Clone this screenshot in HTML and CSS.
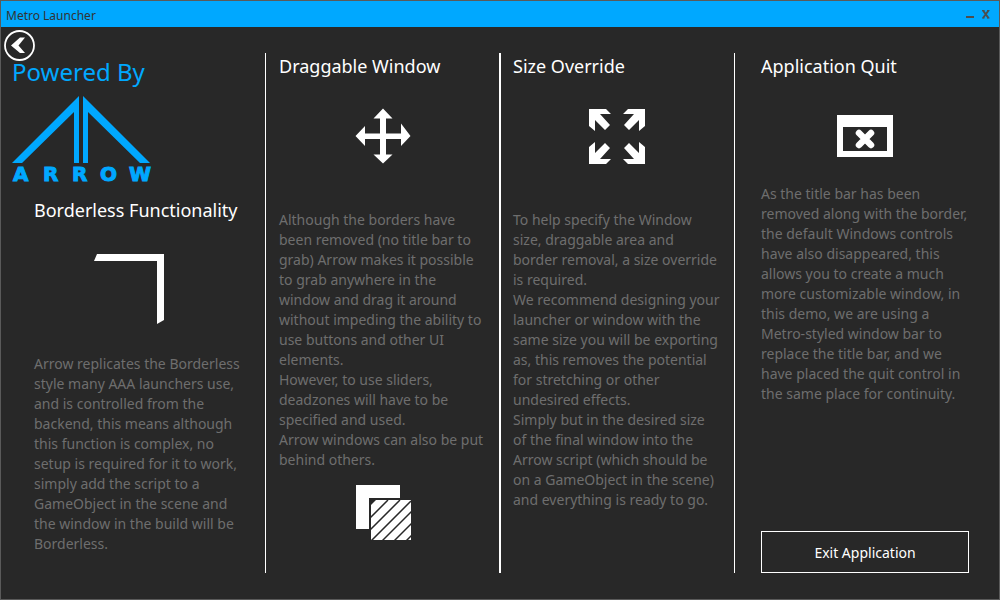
FILE: index.html
```html
<!DOCTYPE html>
<html lang="en">
<head>
<meta charset="utf-8">
<title>Metro Launcher</title>
<link rel="stylesheet" href="styles.css">
</head>
<body>
<div class="window">
  <header class="titlebar">
    <h1 class="title">Metro Launcher</h1>
    <div class="controls">
      <button class="control" type="button" aria-label="Minimize"><svg width="10" height="12" viewBox="0 0 10 12"><path d="M1 7h8v2H1z" fill="#4d4d4d"/></svg></button>
      <button class="control" type="button" aria-label="Close"><svg width="10" height="12" viewBox="0 0 10 12"><path d="M2 1.500 7.500 9M7.500 1.500 2 9" stroke="#4d4d4d" stroke-width="2"/><path d="M1 1.500h2.500M6 1.500h2.500M1 9h2.500M6 9h2.500" stroke="#4d4d4d"/></svg></button>
    </div>
  </header>
  <main class="columns">
    <section class="intro">
      <button class="back" type="button" aria-label="Back"><svg width="31" height="31" viewBox="0 0 31 31"><circle cx="15.500" cy="15.500" r="14.500" fill="none" stroke="#fff" stroke-width="1.800"/><path d="M7 15.500 16 7.500H21L14.500 15.500 21 23H16Z" fill="#fff"/></svg></button>
      <h2 class="powered">Powered By</h2>
      <svg class="logo" width="142" height="96" viewBox="0 0 142 96" fill="#00a8ff" role="img" aria-label="Arrow">
        <path d="M67 2V69H62V18L10 69H0Z"/>
        <path d="M71 2V69H76V18L128 69H138Z"/>
        <text class="wordmark" x="1 31 60 88 117" y="87">ARROW</text>
      </svg>
      <div class="feature">
        <h2 class="heading">Borderless Functionality</h2>
        <svg class="corner" width="72" height="72" viewBox="0 0 72 72" fill="#fff"><path d="M3 1H70V67L63 71V8H0Z"/></svg>
        <p class="text">Arrow replicates the Borderless style many AAA launchers use, and is controlled from the backend, this means although this function is complex, no setup is required for it to work, simply add the script to a GameObject in the scene and the window in the build will be Borderless.</p>
      </div>
    </section>
    <section class="column">
      <h2 class="heading">Draggable Window</h2>
      <svg class="icon" width="56" height="56" viewBox="0 0 56 56" fill="#fff"><path d="M28 .5 37.500 10.500H31V25.500H46V15.500L55.500 28 46 38V31H31V46.500H37.500L28 55.500 18.500 46.500H25V31H10V38L.5 28 10 18V25.500H25V10.500H18.500Z"/></svg>
      <div class="text">
        <p>Although the borders have been removed (no title bar to grab) Arrow makes it possible to grab anywhere in the window and drag it around without impeding the ability to use buttons and other UI elements.</p>
        <p>However, to use sliders, deadzones will have to be specified and used.</p>
        <p>Arrow windows can also be put behind others.</p>
      </div>
      <svg class="stack" width="58" height="58" viewBox="0 0 58 58">
        <path d="M2 0H46V13H15V44H2Z" fill="#fff"/>
        <path d="M17 15H57V55H17Z" fill="#fff"/>
        <path d="M16 33 34 15M16 45 46 15M16 57 57 16M27 57 58 26M39 57 58 38M51 57 58 50" stroke="#282828" stroke-width="1.500"/>
        <path d="M17 15h5l-5 5z" fill="#282828"/>
      </svg>
    </section>
    <section class="column wide-line">
      <h2 class="heading">Size Override</h2>
      <svg class="icon" width="56" height="56" viewBox="0 0 56 56" fill="#fff">
        <path d="M0 1H17L22 6H11L21 17 16 22 6 12V23L0 18Z"/>
        <path d="M56 1H39L34 6H45L35 17 40 22 50 12V23L56 18Z"/>
        <path d="M0 56H17L22 51H11L21 40 16 35 6 45V34L0 39Z"/>
        <path d="M56 56H39L34 51H45L35 40 40 35 50 45V34L56 39Z"/>
      </svg>
      <div class="text">
        <p>To help specify the Window size, draggable area and border removal, a size override is required.</p>
        <p>We recommend designing your launcher or window with the same size you will be exporting as, this removes the potential for stretching or other undesired effects.</p>
        <p>Simply but in the desired size of the final window into the Arrow script (which should be on a GameObject in the scene) and everything is ready to go.</p>
      </div>
    </section>
    <section class="column last">
      <h2 class="heading">Application Quit</h2>
      <svg class="icon" width="56" height="42" viewBox="0 0 56 42"><path d="M0 0H56V42H0ZM6 12V36H50V12Z" fill="#fff" fill-rule="evenodd"/><path d="M22 18 34 30M34 18 22 30" stroke="#fff" stroke-width="6.500" stroke-linecap="round"/></svg>
      <p class="text">As the title bar has been removed along with the border, the default Windows controls have also disappeared, this allows you to create a much more customizable window, in this demo, we are using a Metro-styled window bar to replace the title bar, and we have placed the quit control in the same place for continuity.</p>
      <button class="exit" type="button">Exit Application</button>
    </section>
  </main>
</div>
</body>
</html>
```
FILE: styles.css
```css
* {
  box-sizing: border-box;
}

body,
h1,
h2,
p {
  margin: 0;
}

body {
  background: #282828;
  color: #fff;
  font-family: "Noto Sans", "Open Sans", sans-serif;
}

button {
  padding: 0;
  border: 0;
  background: none;
  color: inherit;
  font-family: inherit;
  cursor: pointer;
}

svg {
  display: block;
}

.window {
  display: flex;
  flex-direction: column;
  min-height: 100vh;
  border: 1px solid #5a5a5a;
}

.titlebar {
  display: flex;
  align-items: center;
  justify-content: space-between;
  height: 26px;
  padding: 2px 8px 0 5px;
  background: #00a8ff;
}

.title {
  color: #333;
  font-size: 12px;
  font-weight: 400;
}

.controls {
  display: flex;
  gap: 6px;
}

.columns {
  flex: 1;
  display: grid;
  grid-template-columns: 264fr 234fr 235fr 265fr;
  padding-bottom: 26px;
}

.intro {
  padding: 3px 0 0 3px;
}

.back {
  display: block;
}

.powered {
  padding-left: 8px;
  color: #00a8ff;
  font-size: 24px;
  font-weight: 400;
  line-height: 22px;
}

.logo {
  margin: 11px 0 0 8px;
}

.wordmark {
  font-family: "DejaVu Sans", sans-serif;
  font-size: 20px;
  font-weight: 700;
  stroke: #00a8ff;
  stroke-width: 1px;
}

.feature {
  padding: 7px 20px 0 30px;
}

.heading {
  font-size: 18px;
  font-weight: 400;
  line-height: 26px;
  white-space: nowrap;
}

.corner {
  margin: 30px 0 29px 60px;
}

.column {
  display: flex;
  flex-direction: column;
  margin-top: 26px;
  padding: 0 13px;
  border-left: 1px solid #fff;
}

.wide-line {
  padding-left: 12px;
  border-left-width: 2px;
}

.last {
  padding: 0 30px 0 26px;
}

.icon {
  align-self: center;
  margin: 29px 0 46px;
}

.last .icon {
  margin: 36px 0 27px;
}

.text {
  color: #6e6e6e;
  font-size: 14px;
  line-height: 20px;
}

.stack {
  align-self: center;
  margin-top: 15px;
}

.exit {
  height: 42px;
  margin-top: auto;
  border: 1px solid #fff;
  font-size: 14px;
}
```
